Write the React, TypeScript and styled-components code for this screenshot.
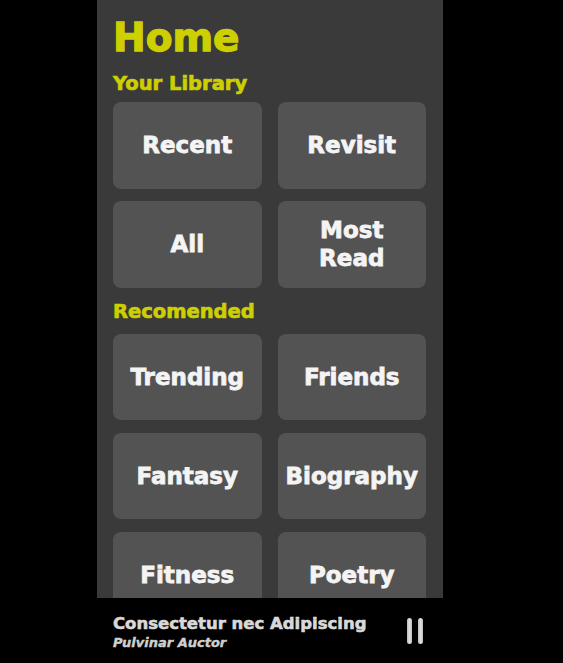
import React from "react";
import styled, { createGlobalStyle } from "styled-components";

const GlobalStyle = createGlobalStyle`
  html, body {
    margin: 0;
    padding: 0;
    background: #000;
    height: 100%;
  }
  body {
    font-family: "DejaVu Sans", "Liberation Sans", sans-serif;
    overflow: hidden;
  }
`;

const Page = styled.div`
  display: flex;
  height: 663px;
  padding-left: 97px;
  background: #000;
`;

const Phone = styled.div`
  width: 346px;
  height: 663px;
  display: flex;
  flex-direction: column;
  background: #3a3a3a;
`;

const Content = styled.main`
  flex: 1;
  overflow: hidden;
  padding: 18px 17px 0 16px;
  display: flex;
  flex-direction: column;
`;

const Title = styled.h1`
  margin: 0;
  font-size: 39px;
  line-height: 39px;
  font-weight: 700;
  color: #cdcf00;
  -webkit-text-stroke: 1.3px #cdcf00;
`;

const SectionLabel = styled.h2<{ $top: number; $bottom: number }>`
  margin: ${(p) => p.$top}px 0 ${(p) => p.$bottom}px 0;
  font-size: 19.5px;
  line-height: 19.5px;
  font-weight: 700;
  color: #cdcf00;
  -webkit-text-stroke: 0.7px #cdcf00;
`;

const Grid = styled.div<{ $row: number; $gap: number }>`
  display: grid;
  grid-template-columns: 1fr 1fr;
  grid-auto-rows: ${(p) => p.$row}px;
  column-gap: 16px;
  row-gap: ${(p) => p.$gap}px;
  flex-shrink: 0;
`;

const Tile = styled.button`
  border: none;
  border-radius: 8px;
  background: #535353;
  color: #f4f4f4;
  -webkit-text-stroke: 0.8px #f4f4f4;
  font-family: "DejaVu Sans", "Liberation Sans", sans-serif;
  font-size: 23px;
  line-height: 28px;
  font-weight: 700;
  display: flex;
  align-items: center;
  justify-content: center;
  text-align: center;
  padding: 0 8px;
  cursor: pointer;
`;

const PlayerBar = styled.footer`
  height: 65px;
  flex-shrink: 0;
  background: #000;
  display: flex;
  align-items: flex-start;
  justify-content: space-between;
  padding: 18px 20px 0 16px;
  box-sizing: border-box;
`;

const TrackInfo = styled.div`
  display: flex;
  flex-direction: column;
  gap: 3px;
`;

const TrackTitle = styled.div`
  font-size: 16.5px;
  line-height: 16.5px;
  font-weight: 700;
  color: #d9d9d9;
  -webkit-text-stroke: 0.6px #d9d9d9;
`;

const TrackArtist = styled.div`
  font-size: 13px;
  line-height: 13px;
  font-weight: 700;
  font-style: italic;
  color: #cfcfcf;
  -webkit-text-stroke: 0.4px #cfcfcf;
`;

const PauseButton = styled.button`
  border: none;
  background: transparent;
  padding: 0;
  margin-top: 2px;
  display: flex;
  gap: 6px;
  cursor: pointer;
`;

const PauseBar = styled.span`
  display: block;
  width: 5px;
  height: 26px;
  border-radius: 3px;
  background: linear-gradient(90deg, #bdbdbd, #e0e0e0 50%, #bdbdbd);
`;

const library = ["Recent", "Revisit", "All", "Most Read"];
const recommended = ["Trending", "Friends", "Fantasy", "Biography", "Fitness", "Poetry"];

export default function App() {
  return (
    <>
      <GlobalStyle />
      <Page>
        <Phone>
          <Content>
            <Title>Home</Title>
            <SectionLabel $top={17} $bottom={8}>
              Your Library
            </SectionLabel>
            <Grid $row={87} $gap={12}>
              {library.map((l) => (
                <Tile key={l}>{l === "Most Read" ? <span>Most<br />Read</span> : l}</Tile>
              ))}
            </Grid>
            <SectionLabel $top={14} $bottom={13}>
              Recomended
            </SectionLabel>
            <Grid $row={86} $gap={13}>
              {recommended.map((l) => (
                <Tile key={l}>{l}</Tile>
              ))}
            </Grid>
          </Content>
          <PlayerBar>
            <TrackInfo>
              <TrackTitle>Consectetur nec Adipiscing</TrackTitle>
              <TrackArtist>Pulvinar Auctor</TrackArtist>
            </TrackInfo>
            <PauseButton aria-label="Pause">
              <PauseBar />
              <PauseBar />
            </PauseButton>
          </PlayerBar>
        </Phone>
      </Page>
    </>
  );
}
